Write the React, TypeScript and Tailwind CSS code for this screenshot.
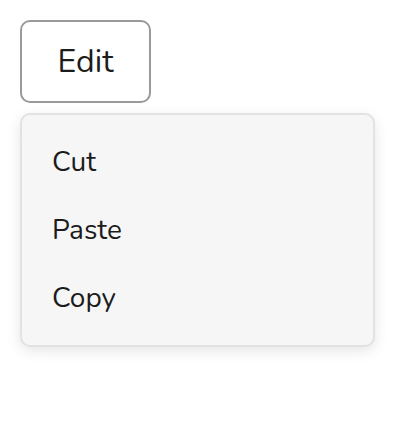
import React from 'react';

const items = ['Cut', 'Paste', 'Copy'];

export default function App() {
  return (
    <div className="min-h-[442px] bg-white p-5 font-['Nunito','Lato','Noto_Sans',sans-serif] text-[#1c1c1c]">
      <button
        type="button"
        className="flex h-[83px] w-[131px] items-center justify-center rounded-[10px] border-2 border-[#9a9a9a] bg-white text-[32px] leading-none"
      >
        Edit
      </button>

      <div className="mt-[10px] w-[355px] rounded-[10px] border-2 border-[#e2e2e2] bg-[#f6f6f6] py-[13px] shadow-[0_4px_14px_rgba(0,0,0,0.10)]">
        {items.map((item) => (
          <div key={item} className="flex h-[68px] items-center px-[30px] text-[28px] leading-none">
            {item}
          </div>
        ))}
      </div>
    </div>
  );
}
